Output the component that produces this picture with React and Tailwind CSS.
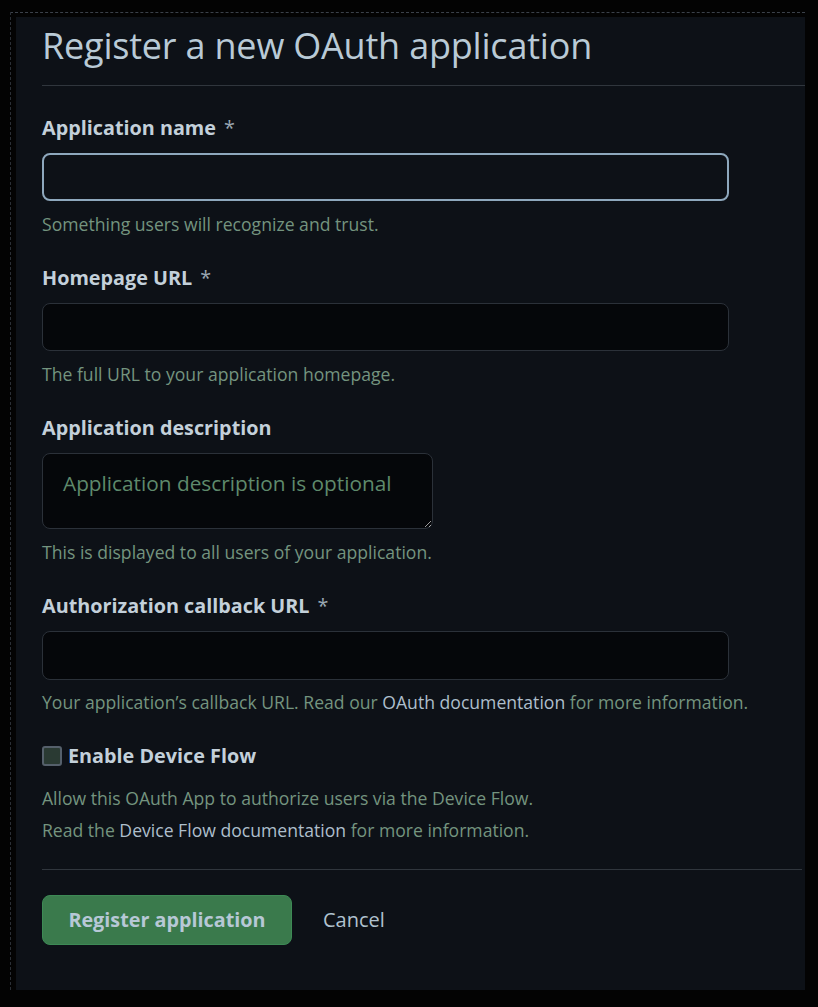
const font = { fontFamily: '"Open Sans", "Noto Sans", sans-serif' };

const Label = ({ children, required, className = "" }) => (
  <label className={`block text-[19.8px] font-bold leading-[26px] text-[#c3d0da] ${className}`}>
    {children}
    {required && <span className="ml-[8px] font-normal text-[#9aa8b3]">*</span>}
  </label>
);

const Help = ({ children, className = "mt-[12px]" }) => (
  <p className={`text-[17.6px] leading-[22px] text-[#74947f] ${className}`}>{children}</p>
);

export default function App() {
  return (
    <div className="min-h-screen bg-[#030303] pt-[12px] pl-[10px] pr-[13px] pb-[14px]" style={font}>
      <div className="border-t border-l border-dashed border-t-[#3b414a] border-l-[#2a2f36] pt-[4px] pl-[5px] h-[978px]">
        <div className="h-full bg-[#0d1117] pl-[26px] pt-[6px]">
          <h1 className="text-[36px] leading-[46px] font-normal text-[#b9cad6] tracking-[-0.2px]">
            Register a new OAuth application
          </h1>
          <div className="mt-[16px] border-t border-[#30363d]" />

          <form className="pt-[29px] pr-[76px]">
            <Label required>Application name</Label>
            <input
              className="mt-[12px] block h-[48px] w-full rounded-[8px] border-2 border-[#8ea8bd] bg-[#0d1117] outline-none"
              type="text"
            />
            <Help>Something users will recognize and trust.</Help>

            <Label required className="mt-[30px]">Homepage URL</Label>
            <input
              className="mt-[12px] block h-[48px] w-full rounded-[8px] border border-[#2b3139] bg-[#05070a] outline-none"
              type="text"
            />
            <Help>The full URL to your application homepage.</Help>

            <Label className="mt-[30px]">Application description</Label>
            <textarea
              className="mt-[12px] block h-[76px] w-[391px] rounded-[8px] border border-[#2b3139] bg-[#05070a] px-[20px] pt-[16px] text-[20.8px] leading-[26px] outline-none placeholder:text-[#5f8a6c]"
              placeholder="Application description is optional"
            />
            <Help>This is displayed to all users of your application.</Help>

            <Label required className="mt-[30px]">Authorization callback URL</Label>
            <input
              className="mt-[12px] block h-[49px] w-full rounded-[8px] border border-[#2b3139] bg-[#05070a] outline-none"
              type="text"
            />
            <Help className="mt-[11px] whitespace-nowrap">
              Your application’s callback URL. Read our{" "}
              <span className="text-[#aebfcc]">OAuth documentation</span> for more information.
            </Help>

            <div className="mt-[30px] flex items-center gap-[6px]">
              <span className="block h-[20px] w-[20px] rounded-[3px] border-2 border-[#55606b] bg-[#2a3a33]" />
              <span className="text-[19.8px] font-bold leading-[26px] text-[#c3d0da]">Enable Device Flow</span>
            </div>
            <Help className="mt-[18px]">Allow this OAuth App to authorize users via the Device Flow.</Help>
            <Help className="mt-[10px]">
              Read the <span className="text-[#aebfcc]">Device Flow documentation</span> for more information.
            </Help>
          </form>

          <div className="mt-[28px] mr-[3px] border-t border-[#30363d]" />

          <div className="mt-[25px] flex items-center gap-[31px]">
            <button className="h-[50px] w-[250px] rounded-[8px] border border-[#3d8a55] bg-[#3a7a4c] text-[19.8px] font-bold text-[#b7c8d6]">
              Register application
            </button>
            <button className="text-[20px] text-[#b0c2cf]">Cancel</button>
          </div>
        </div>
      </div>
    </div>
  );
}
